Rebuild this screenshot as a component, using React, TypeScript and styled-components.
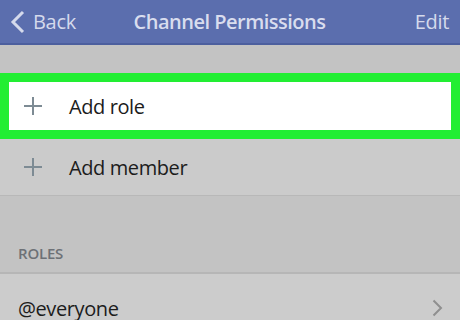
import React from 'react';
import styled, { createGlobalStyle } from 'styled-components';

const GlobalStyle = createGlobalStyle`
	html, body {
		margin: 0;
		padding: 0;
		background: #c3c3c3;
		overflow: hidden;
	}
	body {
		font-family: 'Open Sans', 'Noto Sans', sans-serif;
	}
`;

const Screen = styled.div`
	width: 460px;
	height: 320px;
	display: flex;
	flex-direction: column;
	background: #c3c3c3;
	overflow: hidden;
`;

const Header = styled.div`
	height: 43px;
	flex-shrink: 0;
	display: flex;
	align-items: center;
	justify-content: space-between;
	padding: 0 11px 0 10px;
	background: #5b6eae;
	border-bottom: 2px solid #4c5f9e;
	color: #d5daec;
	font-size: 20px;
	letter-spacing: -0.3px;
`;

const BackButton = styled.div`
	display: flex;
	align-items: center;
	gap: 7px;
	width: 90px;
`;

const Title = styled.div`
	font-weight: 600;
	font-size: 20px;
	letter-spacing: -0.5px;
	color: #d9ddee;
`;

const EditButton = styled.div`
	width: 90px;
	text-align: right;
`;

const Spacer = styled.div<{ $height: number }>`
	height: ${(p) => p.$height}px;
	flex-shrink: 0;
	background: #c3c3c3;
`;

const HighlightRow = styled.div`
	flex-shrink: 0;
	border: 9px solid #22ee33;
	background: #ffffff;
`;

const Row = styled.div<{ $bg?: string }>`
	height: 48px;
	display: flex;
	align-items: center;
	padding: 0 16px 0 15px;
	background: ${(p) => p.$bg || '#cbcbcb'};
	font-size: 20px;
	letter-spacing: -0.4px;
	color: #1c1c1c;
	flex-shrink: 0;
`;

const PlainRow = styled(Row)`
	height: 56px;
	border-bottom: 1px solid #b8b8b8;
	padding-left: 24px;
`;

const IconSlot = styled.div`
	width: 45px;
	display: flex;
	align-items: center;
`;

const Label = styled.div`
	flex: 1;
`;

const SectionHeader = styled.div`
	height: 78px;
	flex-shrink: 0;
	display: flex;
	align-items: flex-end;
	padding: 0 0 9px 18px;
	box-sizing: border-box;
	background: #c3c3c3;
	border-bottom: 2px solid #b6b6b6;
	font-size: 15px;
	font-weight: 600;
	color: #6d7176;
	letter-spacing: -0.2px;
`;

const RoleRow = styled(Row)`
	height: 60px;
	padding: 4px 17px 0 18px;
	background: #cccccc;
`;

const Plus = () => (
	<svg width="18" height="18" viewBox="0 0 18 18">
		<path d="M9 0v18M0 9h18" stroke="#7d8b94" strokeWidth="2" />
	</svg>
);

const App: React.FC = () => {
	return (
		<>
			<GlobalStyle />
			<Screen>
				<Header>
					<BackButton>
						<svg width="16" height="24" viewBox="0 0 16 24">
							<path d="M13 2L3 12l10 10" stroke="#d5daec" strokeWidth="3" fill="none" />
						</svg>
						<span>Back</span>
					</BackButton>
					<Title>Channel Permissions</Title>
					<EditButton>Edit</EditButton>
				</Header>
				<Spacer $height={28} />
				<HighlightRow>
					<Row $bg="#ffffff">
						<IconSlot>
							<Plus />
						</IconSlot>
						<Label>Add role</Label>
					</Row>
				</HighlightRow>
				<PlainRow>
					<IconSlot>
						<Plus />
					</IconSlot>
					<Label>Add member</Label>
				</PlainRow>
				<SectionHeader>ROLES</SectionHeader>
				<RoleRow>
					<Label>@everyone</Label>
					<svg width="11" height="18" viewBox="0 0 11 18">
						<path d="M1.5 1.5L9 9l-7.5 7.5" stroke="#8f8f8f" strokeWidth="2" fill="none" />
					</svg>
				</RoleRow>
			</Screen>
		</>
	);
};

export default App;
